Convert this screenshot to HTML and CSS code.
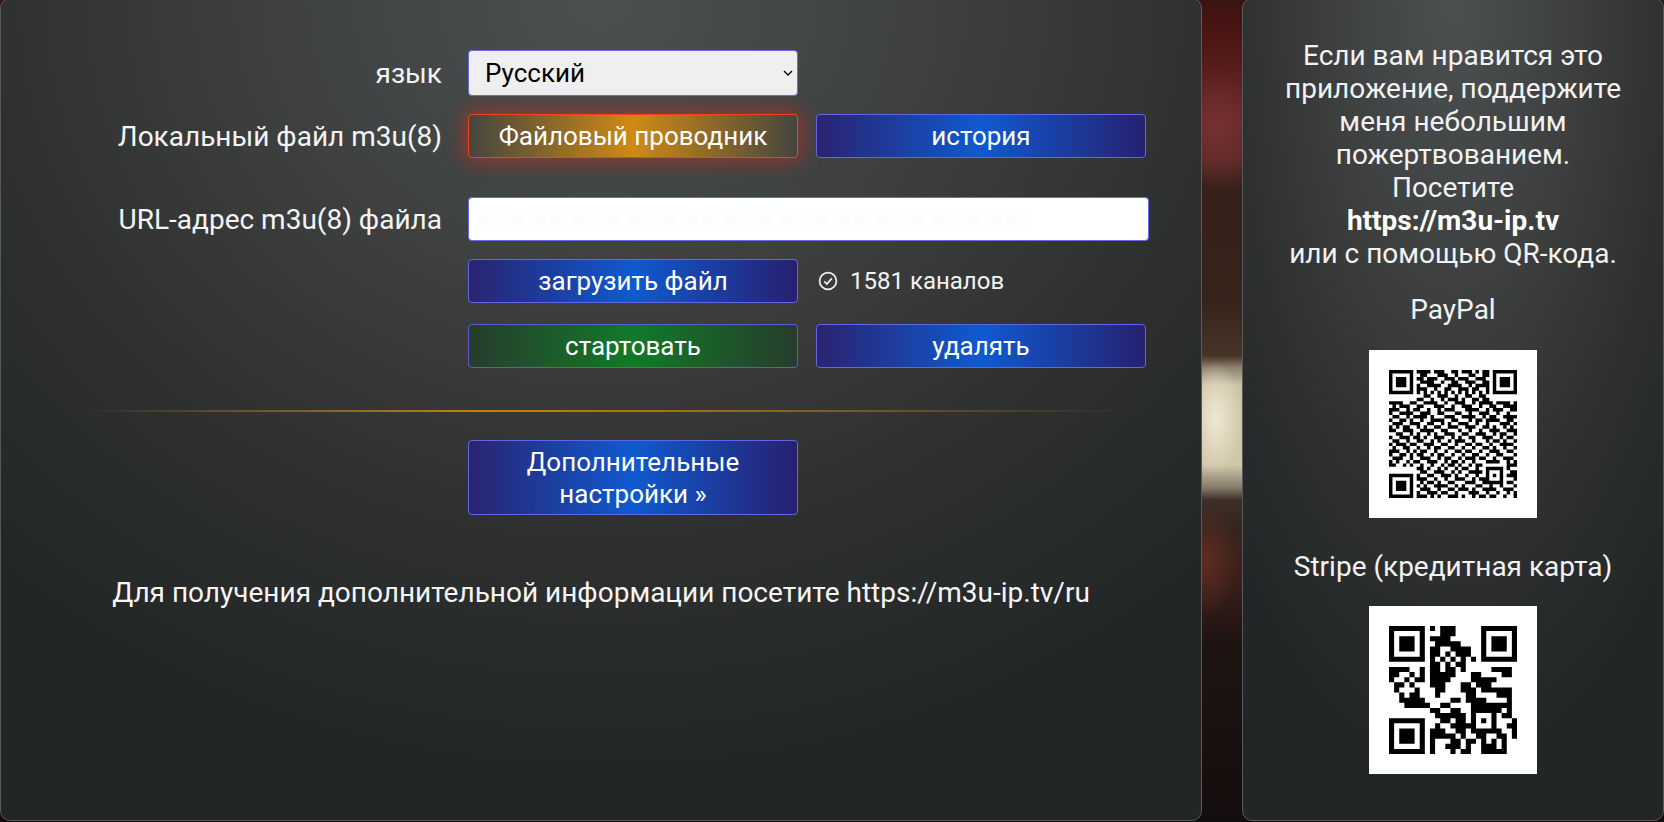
FILE: index.html
```html
<!DOCTYPE html>
<html lang="ru">
<head>
<meta charset="utf-8">
<title>m3u-ip.tv</title>
<link rel="stylesheet" href="styles.css">
</head>
<body>
<div class="page">
  <main class="panel main-panel">
    <div class="row row-lang">
      <label class="label">язык</label>
      <select class="select"><option>Русский</option></select>
    </div>
    <div class="row row-file">
      <label class="label">Локальный файл m3u(8)</label>
      <button class="btn btn-file">Файловый проводник</button>
      <button class="btn">история</button>
    </div>
    <div class="row row-url">
      <label class="label">URL-адрес m3u(8) файла</label>
      <div class="url-box"><span class="smudge"></span></div>
    </div>
    <div class="row row-load">
      <span class="label"></span>
      <button class="btn">загрузить файл</button>
      <span class="status">
        <svg class="check" viewBox="0 0 20 20" width="20" height="20" aria-hidden="true"><circle cx="10" cy="10" r="8.4" fill="none" stroke="currentColor" stroke-width="1.7"/><path d="M6.3 10.4l2.6 2.6 4.9-5.6" fill="none" stroke="currentColor" stroke-width="1.7"/></svg>
        1581 каналов
      </span>
    </div>
    <div class="row row-start">
      <span class="label"></span>
      <button class="btn btn-start">стартовать</button>
      <button class="btn">удалять</button>
    </div>
    <hr class="divider">
    <div class="row">
      <span class="label"></span>
      <button class="btn btn-more">Дополнительные настройки »</button>
    </div>
    <p class="info">Для получения дополнительной информации посетите https://m3u-ip.tv/ru</p>
  </main>
  <aside class="panel side-panel">
    <p class="donate">Если вам нравится это приложение, поддержите меня небольшим пожертвованием.<br>Посетите<br><strong>https://m3u-ip.tv</strong><br>или с помощью QR-кода.</p>
    <p class="pay-title pay-first">PayPal</p>
    <div class="qr">
      <svg viewBox="0 0 37 37" width="128" height="128" aria-label="QR PayPal">
        <path fill-rule="evenodd" d="M0 0h7v7h-7zM1 1v5h5v-5zM2 2h3v3h-3zM30 0h7v7h-7zM31 1v5h5v-5zM32 2h3v3h-3zM0 30h7v7h-7zM1 31v5h5v-5zM2 32h3v3h-3z"/>
        <path fill="none" stroke="#000" d="M8 .5h4M13 .5h3M18 .5h2M21 .5h3M25 .5h1M27 .5h2M9 1.500h2M14 1.500h3M19 1.500h1M23 1.500h2M27 1.500h2M8 2.500h2M11 2.500h3M16 2.500h3M20 2.500h3M25 2.500h3M9 3.500h4M15 3.500h1M18 3.500h2M22 3.500h3M27 3.500h2M8 4.500h1M11 4.500h4M17 4.500h4M23 4.500h1M25 4.500h4M8 5.500h3M13 5.500h1M16 5.500h2M20 5.500h3M24 5.500h2M28 5.500h1M8 6.500h1M10 6.500h1M12 6.500h1M14 6.500h1M16 6.500h1M18 6.500h1M20 6.500h1M22 6.500h1M24 6.500h1M26 6.500h1M28 6.500h1M10 7.500h2M14 7.500h3M19 7.500h1M22 7.500h2M26 7.500h2M8 8.500h2M12 8.500h1M15 8.500h1M17 8.500h3M21 8.500h1M24 8.500h2M27 8.500h2M0 9.500h4M6 9.500h2M10 9.500h4M16 9.500h1M19 9.500h3M24 9.500h1M26 9.500h4M31 9.500h4M36 9.500h1M1 10.500h1M3 10.500h3M8 10.500h2M13 10.500h3M18 10.500h1M21 10.500h3M26 10.500h1M29 10.500h2M33 10.500h4M0 11.500h3M5 11.500h1M7 11.500h2M11 11.500h1M14 11.500h1M16 11.500h3M22 11.500h4M28 11.500h1M30 11.500h3M35 11.500h2M0 12.500h1M3 12.500h4M9 12.500h3M14 12.500h2M19 12.500h2M23 12.500h1M26 12.500h3M31 12.500h1M34 12.500h1M1 13.500h2M5 13.500h1M7 13.500h4M12 13.500h1M16 13.500h3M21 13.500h4M27 13.500h1M29 13.500h2M33 13.500h4M0 14.500h1M3 14.500h2M6 14.500h1M9 14.500h1M12 14.500h4M18 14.500h2M23 14.500h1M25 14.500h2M28 14.500h4M34 14.500h2M1 15.500h3M6 15.500h3M11 15.500h2M15 15.500h1M17 15.500h1M20 15.500h3M25 15.500h1M28 15.500h1M32 15.500h3M36 15.500h1M0 16.500h1M2 16.500h1M4 16.500h2M8 16.500h1M10 16.500h1M13 16.500h2M17 16.500h3M22 16.500h3M27 16.500h2M30 16.500h1M33 16.500h1M35 16.500h1M0 17.500h2M4 17.500h3M9 17.500h4M15 17.500h2M20 17.500h1M23 17.500h1M26 17.500h1M29 17.500h3M34 17.500h3M2 18.500h2M6 18.500h1M8 18.500h1M11 18.500h1M13 18.500h1M16 18.500h3M21 18.500h2M25 18.500h3M30 18.500h1M32 18.500h2M36 18.500h1M0 19.500h1M3 19.500h3M7 19.500h2M10 19.500h1M13 19.500h3M18 19.500h1M20 19.500h1M23 19.500h2M27 19.500h3M32 19.500h1M34 19.500h2M1 20.500h2M5 20.500h1M8 20.500h2M12 20.500h1M14 20.500h1M17 20.500h1M19 20.500h3M24 20.500h1M28 20.500h1M30 20.500h2M33 20.500h1M36 20.500h1M0 21.500h1M2 21.500h3M6 21.500h2M10 21.500h3M15 21.500h2M19 21.500h1M22 21.500h2M25 21.500h2M29 21.500h1M32 21.500h4M1 22.500h1M4 22.500h2M8 22.500h1M11 22.500h1M13 22.500h2M17 22.500h2M21 22.500h1M24 22.500h1M27 22.500h2M30 22.500h1M33 22.500h1M36 22.500h1M0 23.500h3M5 23.500h1M7 23.500h1M9 23.500h2M13 23.500h1M16 23.500h1M19 23.500h2M22 23.500h2M26 23.500h1M29 23.500h3M34 23.500h2M0 24.500h1M3 24.500h2M6 24.500h1M8 24.500h2M12 24.500h1M14 24.500h2M18 24.500h1M21 24.500h1M24 24.500h2M28 24.500h1M31 24.500h2M36 24.500h1M1 25.500h3M6 25.500h1M9 25.500h3M14 25.500h1M16 25.500h2M20 25.500h1M22 25.500h3M26 25.500h2M30 25.500h1M33 25.500h3M0 26.500h1M2 26.500h1M5 26.500h1M7 26.500h2M11 26.500h3M16 26.500h1M18 26.500h2M21 26.500h1M24 26.500h1M28 26.500h4M34 26.500h1M36 26.500h1M0 27.500h2M4 27.500h1M6 27.500h1M9 27.500h1M12 27.500h1M15 27.500h1M17 27.500h2M20 27.500h1M23 27.500h1M25 27.500h2M34 27.500h3M8 28.500h2M11 28.500h1M14 28.500h1M16 28.500h1M19 28.500h1M21 28.500h2M25 28.500h1M28 28.500h5M34 28.500h1M9 29.500h2M13 29.500h3M18 29.500h1M20 29.500h1M23 29.500h4M28 29.500h1M32 29.500h1M35 29.500h2M8 30.500h1M11 30.500h2M15 30.500h3M19 30.500h1M22 30.500h1M25 30.500h1M28 30.500h1M30 30.500h1M32 30.500h1M34 30.500h3M8 31.500h3M13 31.500h1M16 31.500h1M19 31.500h3M24 31.500h1M26 31.500h3M32 31.500h1M36 31.500h1M9 32.500h1M11 32.500h2M14 32.500h1M17 32.500h2M22 32.500h3M27 32.500h6M34 32.500h2M8 33.500h1M10 33.500h1M13 33.500h4M19 33.500h1M21 33.500h1M25 33.500h2M29 33.500h1M32 33.500h1M36 33.500h1M9 34.500h3M14 34.500h1M17 34.500h2M20 34.500h3M24 34.500h1M27 34.500h4M33 34.500h3M8 35.500h1M11 35.500h3M15 35.500h2M19 35.500h1M23 35.500h3M28 35.500h1M31 35.500h1M34 35.500h1M36 35.500h1M8 36.500h3M12 36.500h1M14 36.500h1M17 36.500h3M21 36.500h1M24 36.500h1M26 36.500h2M29 36.500h2M33 36.500h1M36 36.500h1"/>
      </svg>
    </div>
    <p class="pay-title pay-second">Stripe (кредитная карта)</p>
    <div class="qr qr-second">
      <svg viewBox="0 0 25 25" width="128" height="128" aria-label="QR Stripe">
        <path fill-rule="evenodd" d="M0 0h7v7h-7zM1 1v5h5v-5zM2 2h3v3h-3zM18 0h7v7h-7zM19 1v5h5v-5zM20 2h3v3h-3zM0 18h7v7h-7zM1 19v5h5v-5zM2 20h3v3h-3z"/>
        <path fill="none" stroke="#000" d="M8 .5h1M10 .5h3M10 1.500h3M8 2.500h4M9 3.500h5M8 4.500h2M12 4.500h4M8 5.500h2M11 5.500h1M13 5.500h3M8 6.500h1M10 6.500h1M12 6.500h1M14 6.500h1M16 6.500h1M8 7.500h2M11 7.500h1M13 7.500h2M0 8.500h4M6 8.500h1M8 8.500h2M11 8.500h2M14 8.500h1M20 8.500h4M0 9.500h2M4 9.500h1M6 9.500h1M8 9.500h5M16 9.500h2M22 9.500h2M0 10.500h1M3 10.500h1M5 10.500h2M8 10.500h4M16 10.500h4M20 10.500h1M1 11.500h2M4 11.500h1M8 11.500h3M14 11.500h2M17 11.500h3M1 12.500h1M5 12.500h1M9 12.500h2M14 12.500h3M18 12.500h6M2 13.500h1M4 13.500h2M9 13.500h1M15 13.500h2M21 13.500h3M2 14.500h5M12 14.500h2M15 14.500h4M23 14.500h1M3 15.500h5M10 15.500h2M16 15.500h8M8 16.500h2M12 16.500h2M16 16.500h6M23 16.500h1M9 17.500h6M16 17.500h1M20 17.500h1M22 17.500h2M10 18.500h2M13 18.500h2M16 18.500h1M18 18.500h1M20 18.500h1M24 18.500h1M9 19.500h1M12 19.500h4M16 19.500h1M20 19.500h1M23 19.500h2M8 20.500h3M13 20.500h2M16 20.500h6M24 20.500h1M8 21.500h5M14 21.500h1M17 21.500h2M21 21.500h2M24 21.500h1M8 22.500h1M12 22.500h2M15 22.500h2M18 22.500h1M20 22.500h1M22 22.500h1M8 23.500h1M11 23.500h3M15 23.500h1M18 23.500h2M20 23.500h1M22 23.500h1M8 24.500h1M12 24.500h1M14 24.500h2M18 24.500h5"/>
      </svg>
    </div>
  </aside>
</div>
</body>
</html>
```

FILE: styles.css
```css
* { box-sizing: border-box; }
html, body { margin: 0; height: 100%; }
body {
  overflow: hidden;
  font-family: Roboto, "Noto Sans", "Liberation Sans", sans-serif;
  color: #fff;
  background:
    radial-gradient(ellipse 34px 60px at 1218px 128px, rgba(130,52,58,.55), rgba(110,40,40,0) 100%),
    radial-gradient(ellipse 28px 56px at 1216px 418px, rgba(242,234,214,.95), rgba(235,226,200,0) 100%),
    radial-gradient(ellipse 32px 60px at 1206px 560px, rgba(100,46,36,.8), rgba(100,46,36,0) 100%),
    linear-gradient(180deg, #3a1411 0, #4d1614 40px, #6a2a2c 120px, #5a2a26 160px, #36201a 190px, #35241b 300px, #463429 356px, #8f8470 368px, #cbc1a4 385px, #d0c6a8 465px, #837969 488px, #3d2f28 500px, #33261f 525px, #3f201b 570px, #1f1412 640px, #140d0d 822px);
}
.page { display: flex; gap: 40px; height: 823px; margin-top: -2px; }
.panel {
  border: 1px solid #555a5b;
  border-radius: 10px;
  background:
    radial-gradient(ellipse 75% 95% at 50% 0, #4c5051 0, #3e4040 38%, #2e3030 70%, #232626 100%);
}
.main-panel { width: 1202px; flex: none; padding-top: 51px; }
.side-panel { flex: 1; padding-top: 40px; text-align: center; }

.row { display: flex; align-items: center; }
.label { width: 441px; flex: none; margin-right: 26px; text-align: right; font-size: 28px; color: #f4f4f4; }
.row-file { margin-top: 18px; }
.row-file .btn + .btn { margin-left: 18px; }
.row-url { margin-top: 39px; }
.row-load { margin-top: 18px; }
.row-start { margin-top: 21px; }
.row-start .btn + .btn { margin-left: 18px; }

.select {
  appearance: none;
  width: 330px; height: 46px; padding: 0 0 0 16px;
  font: 26px Roboto, sans-serif; color: #000;
  background-color: #efefef;
  background-image: url("data:image/svg+xml,%3Csvg xmlns='http://www.w3.org/2000/svg' width='10' height='6' viewBox='0 0 10 6'%3E%3Cpath d='M1 1l4 4 4-4' fill='none' stroke='%23000' stroke-width='1.4'/%3E%3C/svg%3E");
  background-repeat: no-repeat;
  background-position: right 4px center;
  border: 1px solid #6b6be6; border-radius: 4px;
}
.btn {
  width: 330px; height: 44px; flex: none; padding: 0 16px;
  font: 26px/32px Roboto, sans-serif; color: #fff;
  background: linear-gradient(90deg, #2a2370 0, #0f5ad0 50%, #272070 100%);
  border: 1px solid #6464e8; border-radius: 4px;
}
.btn-file {
  background: linear-gradient(90deg, #45453f 0, #d08a14 50%, #45453f 100%);
  border-color: #f2431f;
  box-shadow: 0 0 18px 4px rgba(205,45,25,.55);
}
.btn-start { background: linear-gradient(90deg, #273c2c 0, #117a2a 50%, #273c2c 100%); border-color: #5a5ad6; }
.btn-more { height: 75px; }

.url-box {
  position: relative; width: 681px; height: 44px; background: #fff;
  border: 1px solid #6a6ae8; border-radius: 4px; overflow: hidden;
}
.smudge {
  position: absolute; left: 6px; right: 120px; top: 15px; height: 14px;
  background: repeating-linear-gradient(90deg, rgba(60,60,70,.01) 0 13px, transparent 13px 19px);
  filter: blur(3px);
}
.status { display: flex; align-items: center; gap: 12px; margin-left: 20px; font-size: 24px; color: #f2f2f2; }
.check { flex: none; }

.divider {
  height: 2px; margin: 42px 70px 28px 80px; border: 0;
  background: linear-gradient(90deg, rgba(200,130,30,0) 0, #c08020 38%, #a87018 55%, rgba(170,110,40,0) 100%);
}
.info { margin: 61px 0 0; text-align: center; font-size: 28px; line-height: 33px; color: #f6f6f6; }

.donate { margin: 0 30px; font-size: 28px; line-height: 33px; color: #f2f2f2; }
.donate strong { font-weight: 700; color: #fff; }
.pay-title { margin: 0; font-size: 28px; line-height: 33px; color: #f2f2f2; }
.pay-first { margin-top: 23px; }
.pay-second { margin-top: 32px; }
.qr {
  display: flex; align-items: center; justify-content: center;
  width: 168px; height: 168px; margin: 24px auto 0; background: #fff;
}
.qr-second { margin-top: 23px; }
```
